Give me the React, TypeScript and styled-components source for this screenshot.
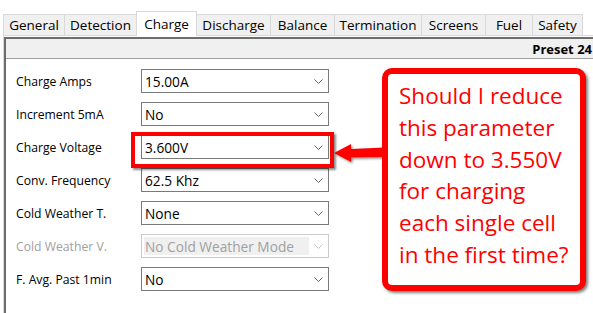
import React from "react";
import styled, { createGlobalStyle } from "styled-components";

const Global = createGlobalStyle`
  html, body { margin: 0; padding: 0; background: #ffffff; }
  body { font-family: "Open Sans", "Liberation Sans", Arial, sans-serif; }
`;

const Screen = styled.div`
  position: relative;
  width: 593px;
  height: 313px;
  overflow: hidden;
  display: flex;
  flex-direction: column;
  background: #ffffff;
`;

const TabStrip = styled.div`
  display: flex;
  align-items: flex-end;
  height: 24px;
  margin-top: 11px;
  padding-left: 3px;
`;

const Tab = styled.div<{ $w: number; $active?: boolean }>`
  position: relative;
  z-index: ${(p) => (p.$active ? 2 : 1)};
  box-sizing: border-box;
  width: ${(p) => p.$w}px;
  height: ${(p) => (p.$active ? 25 : 21)}px;
  margin-right: -1px;
  margin-bottom: ${(p) => (p.$active ? -1 : 0)}px;
  border: 1px solid #d9d9d9;
  border-bottom: none;
  background: ${(p) => (p.$active ? "#ffffff" : "#f0f0f0")};
  display: flex;
  align-items: center;
  justify-content: center;
  font-size: 13.5px;
  color: #000;
  white-space: nowrap;
`;

const TabBody = styled.div`
  flex: 1;
  display: flex;
  flex-direction: column;
  margin-left: 3px;
  border-top: 1px solid #d9d9d9;
  border-left: 1px solid #d9d9d9;
  padding-top: 1px;
`;

const Page = styled.div`
  flex: 1;
  display: flex;
  flex-direction: column;
  border-top: 2px solid #6d6d6d;
  border-left: 2px solid #6d6d6d;
`;

const Header = styled.div`
  height: 19px;
  background: #f0f0f0;
  border-bottom: 1px solid #a0a0a0;
  display: flex;
  align-items: center;
  justify-content: flex-end;
  padding-right: 1px;
  font-size: 13px;
  font-weight: 700;
  color: #000;
`;

const Form = styled.div`
  display: grid;
  grid-template-columns: 125px 188px;
  grid-auto-rows: 24px;
  row-gap: 9px;
  padding: 10px 0 0 10px;
`;

const Label = styled.div<{ $disabled?: boolean }>`
  display: flex;
  align-items: center;
  font-size: 12.2px;
  color: ${(p) => (p.$disabled ? "#a0a0a0" : "#000")};
  white-space: nowrap;
`;

const Combo = styled.div<{ $disabled?: boolean }>`
  box-sizing: border-box;
  height: 24px;
  border: 1px solid ${(p) => (p.$disabled ? "#cccccc" : "#7a7a7a")};
  background: #ffffff;
  display: flex;
  align-items: stretch;
  padding: 2px 5px 2px 2px;
`;

const ComboValue = styled.div<{ $disabled?: boolean }>`
  width: 164px;
  display: flex;
  align-items: center;
  padding-left: 1px;
  font-size: 13.7px;
  color: ${(p) => (p.$disabled ? "#a0a0a0" : "#000")};
  background: ${(p) => (p.$disabled ? "#f0f0f0" : "transparent")};
  white-space: nowrap;
  overflow: hidden;
`;

const ComboArrow = styled.div`
  flex: 1;
  display: flex;
  align-items: center;
  justify-content: flex-end;
`;

const Highlight = styled.div`
  position: absolute;
  left: 131px;
  top: 132px;
  width: 203px;
  height: 36px;
  box-sizing: border-box;
  border: 4px solid #ff0000;
  box-shadow: 2px 2px 2px rgba(0, 0, 0, 0.45);
  z-index: 3;
`;

const Pointer = styled.svg`
  position: absolute;
  left: 330px;
  top: 138px;
  z-index: 4;
  overflow: visible;
`;

const Callout = styled.div`
  position: absolute;
  left: 382px;
  top: 68px;
  width: 204px;
  height: 223px;
  box-sizing: border-box;
  border: 6px solid #ff0000;
  border-radius: 10px;
  background: #ffffff;
  box-shadow: 2px 2px 3px rgba(0, 0, 0, 0.5);
  padding: 6px 0 0 11px;
  z-index: 5;
  font-size: 22.5px;
  line-height: 31.8px;
  color: #ff0000;
  white-space: nowrap;
`;

const Chevron = ({ disabled }: { disabled?: boolean }) => (
  <svg width="9" height="5" viewBox="0 0 9 5">
    <polyline
      points="0.5,0.5 4.5,4.5 8.5,0.5"
      fill="none"
      stroke={disabled ? "#c8c8c8" : "#666666"}
      strokeWidth="1"
    />
  </svg>
);

const tabs = [
  { label: "General", w: 62 },
  { label: "Detection", w: 73 },
  { label: "Charge", w: 61, active: true },
  { label: "Discharge", w: 75 },
  { label: "Balance", w: 65 },
  { label: "Termination", w: 88 },
  { label: "Screens", w: 65 },
  { label: "Fuel", w: 48 },
  { label: "Safety", w: 51 },
];

const rows = [
  { label: "Charge Amps", value: "15.00A" },
  { label: "Increment 5mA", value: "No" },
  { label: "Charge Voltage", value: "3.600V" },
  { label: "Conv. Frequency", value: "62.5 Khz" },
  { label: "Cold Weather T.", value: "None" },
  { label: "Cold Weather V.", value: "No Cold Weather Mode", disabled: true },
  { label: "F. Avg. Past 1min", value: "No" },
];

export default function App() {
  return (
    <>
      <Global />
      <Screen>
        <TabStrip>
          {tabs.map((t) => (
            <Tab key={t.label} $w={t.w} $active={t.active}>
              {t.label}
            </Tab>
          ))}
        </TabStrip>
        <TabBody>
          <Page>
            <Header>Preset 24</Header>
            <Form>
              {rows.map((r) => (
                <React.Fragment key={r.label}>
                  <Label $disabled={r.disabled}>{r.label}</Label>
                  <Combo $disabled={r.disabled}>
                    <ComboValue $disabled={r.disabled}>{r.value}</ComboValue>
                    <ComboArrow>
                      <Chevron disabled={r.disabled} />
                    </ComboArrow>
                  </Combo>
                </React.Fragment>
              ))}
            </Form>
          </Page>
        </TabBody>
        <Highlight />
        <Pointer width="56" height="30" viewBox="0 0 56 30">
          <defs>
            <filter id="sh" x="-20%" y="-40%" width="150%" height="190%">
              <feDropShadow dx="1.5" dy="1.5" stdDeviation="1" floodColor="#000" floodOpacity="0.45" />
            </filter>
          </defs>
          <polygon
            points="4,15 21,6 21,11 54,9.5 54,19 21,19.5 21,24"
            fill="#ff0000"
            filter="url(#sh)"
          />
        </Pointer>
        <Callout>
          Should I reduce
          <br />
          this parameter
          <br />
          down to 3.550V
          <br />
          for charging
          <br />
          each single cell
          <br />
          in the first time?
        </Callout>
      </Screen>
    </>
  );
}
